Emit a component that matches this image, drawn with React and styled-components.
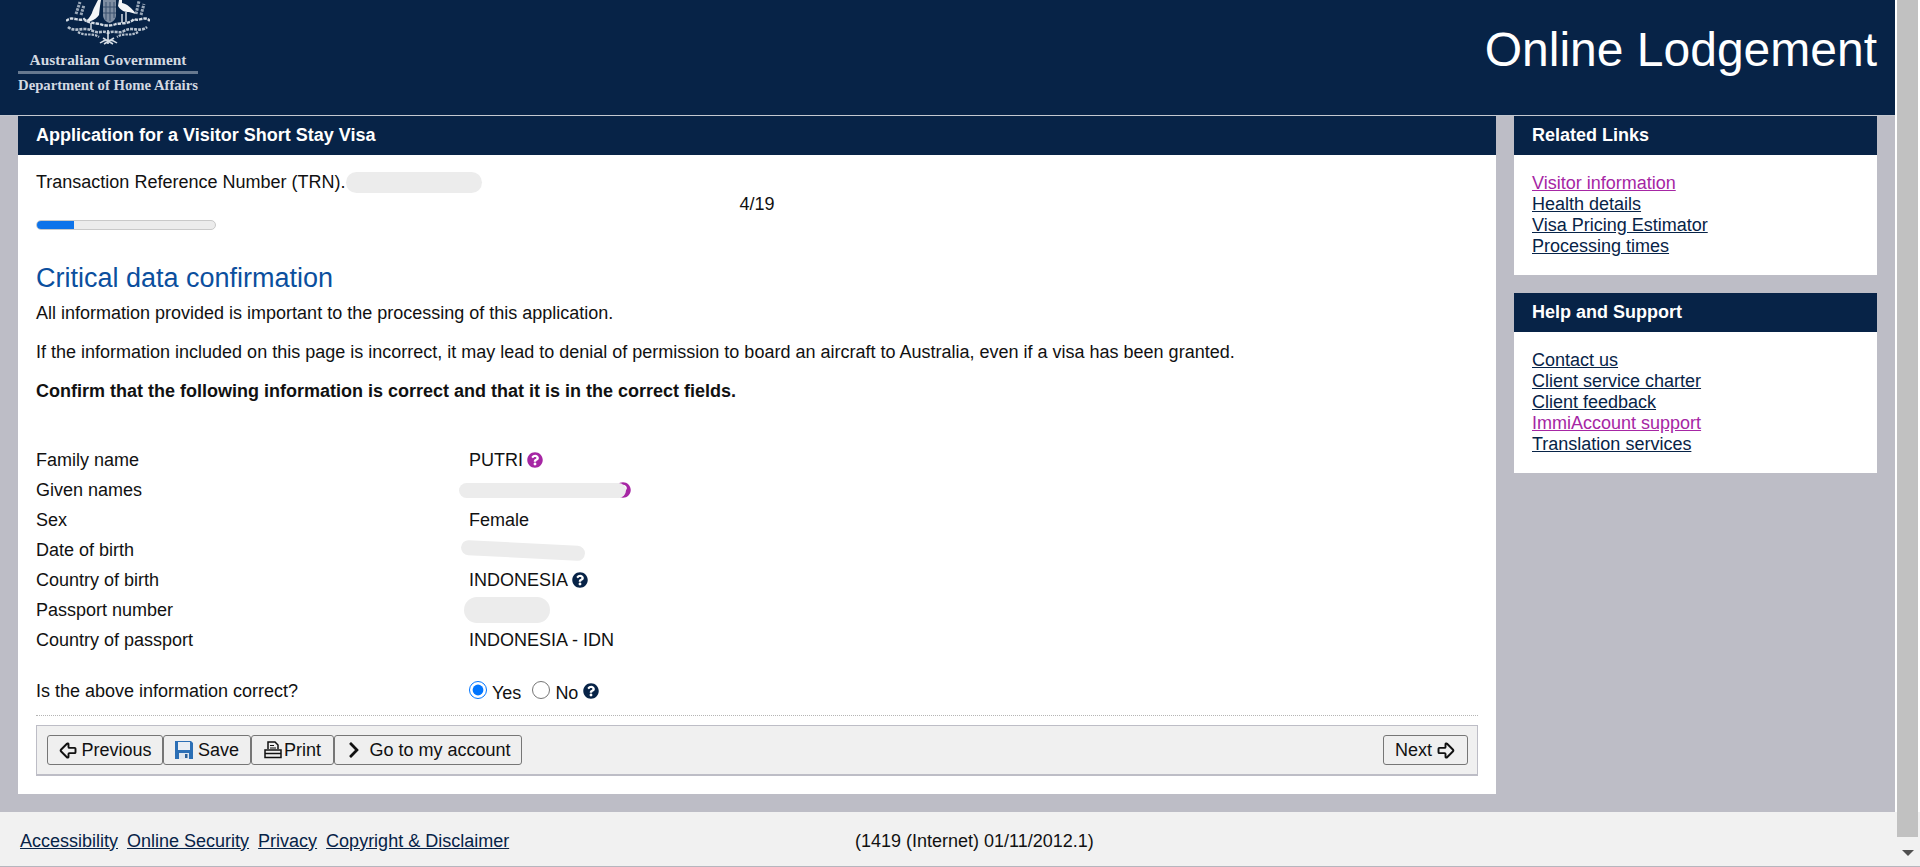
import React from "react";
import styled, { createGlobalStyle } from "styled-components";
import { FaQuestionCircle, FaChevronRight } from "react-icons/fa";
import { ArrowBigLeft, ArrowBigRight } from "lucide-react";

const NAVY = "#072347";
const VISITED = "#a626a4";

const GlobalStyle = createGlobalStyle`
  html, body {
    margin: 0;
    padding: 0;
    height: 867px;
    overflow: hidden;
    background: #fff;
    font-family: "Liberation Sans", Arial, sans-serif;
    font-size: 18px;
    line-height: 21px;
    color: #111;
  }
`;

const Shell = styled.div`
  display: flex;
  height: 866px;
  border-bottom: 1px solid #b6b6be;
  overflow: hidden;
`;

const Page = styled.div`
  width: 1895px;
  display: flex;
  flex-direction: column;
  background: #bdbdc6;
`;

/* fake browser scrollbar */
const ScrollTrack = styled.div`
  flex: 1;
  display: flex;
  flex-direction: column;
  align-items: center;
  background: linear-gradient(#fff, #fff) top / 100% 812px no-repeat, #f1f1f1;
  padding: 0 2px;
`;

const ScrollThumb = styled.div`
  width: 21px;
  height: 837px;
  background: #c1c1c1;
`;

const ScrollArrow = styled.div`
  margin-top: 13px;
  width: 0;
  height: 0;
  border-left: 6px solid transparent;
  border-right: 6px solid transparent;
  border-top: 6px solid #505050;
`;

const Header = styled.header`
  height: 115px;
  flex: none;
  display: flex;
  justify-content: space-between;
  background: ${NAVY};
  border-bottom: 1px solid #c4c8d0;
  padding: 0 18px;
`;

const Logo = styled.div`
  width: 180px;
  display: flex;
  flex-direction: column;
  align-items: center;
`;

const Crest = styled.svg`
  width: 84px;
  height: 46px;
  flex: none;
`;

const LogoTop = styled.div`
  width: 100%;
  text-align: center;
  white-space: nowrap;
  font: bold 15.4px/15px "Liberation Serif", "Times New Roman", serif;
  color: #d3d9e1;
  margin-top: 6px;
  padding-bottom: 4px;
  border-bottom: 3px solid #66788f;
`;

const LogoBottom = styled.div`
  white-space: nowrap;
  font: bold 14.7px/15px "Liberation Serif", "Times New Roman", serif;
  color: #d3d9e1;
  margin-top: 4px;
`;

const SiteTitle = styled.h1`
  margin: 24px 0 0;
  font-size: 48px;
  line-height: 52px;
  font-weight: 400;
  color: #fff;
`;

const Columns = styled.div`
  flex: 1;
  display: grid;
  grid-template-columns: 1478px 363px;
  column-gap: 18px;
  padding: 0 18px;
  align-items: start;
`;

const Panel = styled.section`
  background: #fff;
`;

const PanelHead = styled.h2`
  margin: 0;
  height: 39px;
  background: ${NAVY};
  color: #fff;
  font-size: 18px;
  line-height: 38px;
  font-weight: 700;
  padding: 0 18px;
`;

const MainBody = styled.div`
  padding: 17px 18px 18px;
`;

const TrnLine = styled.div`
  display: flex;
  align-items: center;
  height: 21px;
`;

const Blob = styled.span`
  display: inline-block;
  flex: none;
  width: ${(p) => p.$w}px;
  height: ${(p) => p.$h}px;
  margin-left: ${(p) => p.$ml || 0}px;
  background: #ececec;
  border-radius: ${(p) => p.$h / 2}px;
  position: relative;
  z-index: 1;
  transform: rotate(${(p) => p.$tilt || 0}deg);
`;

const StepCount = styled.div`
  text-align: center;
  height: 21px;
  margin-top: 1px;
`;

const Progress = styled.div`
  width: 180px;
  height: 10px;
  box-sizing: border-box;
  margin-top: 5px;
  background: #ececec;
  border: 1px solid #c9c9c9;
  border-radius: 5px;
  overflow: hidden;
`;

const ProgressFill = styled.div`
  height: 100%;
  background: #0d73ea;
`;

const Heading = styled.h3`
  margin: 33px 0 0;
  font-size: 27px;
  line-height: 30px;
  font-weight: 400;
  color: #0b4f9e;
`;

const Para = styled.p`
  margin: ${(p) => p.$top}px 0 0;
  font-weight: ${(p) => (p.$bold ? 700 : 400)};
`;

const DataList = styled.div`
  margin-top: 43px;
`;

const DataRow = styled.div`
  display: grid;
  grid-template-columns: 433px 1fr;
  height: 30px;
  align-items: center;
`;

const Value = styled.div`
  display: flex;
  align-items: center;
  gap: 4px;
`;

const Help = styled(FaQuestionCircle)`
  width: 16px;
  height: 16px;
  color: ${(p) => p.$color || NAVY};
  flex: none;
`;

const HiddenHelp = styled(Help)`
  margin-left: -15px;
`;

const QuestionRow = styled(DataRow)`
  margin-top: 21px;
`;

const Radio = styled.input`
  width: 18px;
  height: 18px;
  margin: 0 5px 2px 0;
  accent-color: #0075ff;
  flex: none;
`;

const RadioText = styled.span`
  margin: 4px 11px 0 0;
`;

const Rule = styled.hr`
  margin: 9px 0 0;
  border: 0;
  border-top: 1px dotted #b5b5b5;
`;

const NavBar = styled.div`
  margin-top: 9px;
  height: 51px;
  box-sizing: border-box;
  display: flex;
  align-items: center;
  justify-content: space-between;
  padding: 0 9px 0 10px;
  background: #f0f0f0;
  border: 2px solid #bdbdc6;
  border-width: 1px 1px 2px;
`;

const ButtonGroup = styled.div`
  display: flex;
`;

const NavButton = styled.button`
  display: flex;
  align-items: center;
  gap: ${(p) => p.$gap || 2}px;
  height: 30px;
  width: ${(p) => p.$w}px;
  box-sizing: border-box;
  justify-content: center;
  padding: 0;
  background: #efefef;
  border: 1px solid #767676;
  border-radius: 3px;
  font: inherit;
  color: #111;
  white-space: nowrap;
`;

const Side = styled.div`
  display: flex;
  flex-direction: column;
  gap: 18px;
`;

const LinkList = styled.div`
  display: flex;
  flex-direction: column;
  align-items: flex-start;
  padding: 18px 18px ${(p) => p.$bottom}px;
`;

const PageLink = styled.a`
  color: ${(p) => (p.$visited ? VISITED : NAVY)};
  text-decoration: underline;
`;

const Footer = styled.footer`
  margin-top: auto;
  height: 54px;
  flex: none;
  box-sizing: border-box;
  display: grid;
  grid-template-columns: 835px auto;
  align-items: center;
  padding: 4px 20px 0;
  background: #f1f1f1;
`;

const FooterLinks = styled.nav`
  display: flex;
  gap: 9px;
`;

const CrestLogo = () => (
  <Crest viewBox="0 0 84 46" aria-hidden="true">
    <path d="M32 0C29 6 27 9 26 13C24 17 22 20 18 22L25 21C28 20 31 18 33 15L34 6L35 0Z" fill="#f4f6f8" />
    <path d="M53 0L52 6C55 11 59 12 63 12L70 14C66 8 61 4 56 3L56 0Z" fill="#f4f6f8" />
    <path d="M37 0H50V15C50 19 47 22 43.5 23C40 22 37 19 37 15Z" fill="#7f8ea3" />
    <path d="M40 2V20M44 2V21M48 2V18M37 7H50M37 13H50" stroke="#3a516f" strokeWidth="1" />
    <path d="M60 12V22M25 23V30M56 14V23" stroke="#d5dce4" strokeWidth="1.5" />
    <path d="M0 21C6 15 12 22 18 19C22 23 28 23 34 24C38 26 46 26 50 24C56 23 64 24 68 19C73 22 79 15 84 21" fill="none" stroke="#d5dce4" strokeWidth="2.4" strokeDasharray="3.5 1" />
    <path d="M2 27C9 33 18 26 27 31C32 34 37 30 42 33C48 30 53 34 58 31C66 26 74 33 81 27" fill="none" stroke="#b5c0cd" strokeWidth="2.6" strokeDasharray="3 1" />
    <path d="M12 32C20 37 26 32 33 37M72 32C64 37 58 32 51 37" fill="none" stroke="#b5c0cd" strokeWidth="2.2" strokeDasharray="2.5 1" />
    <path d="M34 43C39 39 46 39 51 43M42 30V44M37 38L47 44M48 38L38 44" fill="none" stroke="#d5dce4" strokeWidth="1.6" />
    <path d="M10 14L14 2M15 15L18 5M70 14L73 1M75 15L78 4" stroke="#9aa8b9" strokeWidth="3" strokeDasharray="2.5 1" />
  </Crest>
);

const SaveIcon = () => (
  <svg width="18" height="18" viewBox="0 0 18 18" aria-hidden="true">
    <path d="M0 0H16L18 2V18H0Z" fill="#2c6fb5" />
    <rect x="3" y="1" width="12" height="8" fill="#e9eef4" />
    <rect x="4" y="12" width="10" height="6" fill="#dfe6ee" />
    <rect x="10" y="13" width="2.5" height="4" fill="#2c5f96" />
  </svg>
);

const PrintIcon = () => (
  <svg width="18" height="18" viewBox="0 0 18 18" fill="none" stroke="#111" aria-hidden="true">
    <path d="M4 8V1H11L14 4V8" strokeWidth="1.5" />
    <path d="M6 4.5H10M6 7H12" strokeWidth="1.2" />
    <path d="M1 9H17V16.5H1Z" strokeWidth="1.5" />
    <path d="M1 12.5H17" strokeWidth="1.5" />
  </svg>
);

const rows = [
  { label: "Family name", value: "PUTRI", help: VISITED },
  { label: "Given names", blob: { $w: 167, $h: 15, $ml: -10 }, hidden: true },
  { label: "Sex", value: "Female" },
  { label: "Date of birth", blob: { $w: 124, $h: 15, $ml: -8, $tilt: 3 } },
  { label: "Country of birth", value: "INDONESIA", help: NAVY },
  { label: "Passport number", blob: { $w: 86, $h: 26, $ml: -5 } },
  { label: "Country of passport", value: "INDONESIA - IDN" },
];

const relatedLinks = [
  { text: "Visitor information", visited: true },
  { text: "Health details" },
  { text: "Visa Pricing Estimator" },
  { text: "Processing times" },
];

const helpLinks = [
  { text: "Contact us" },
  { text: "Client service charter" },
  { text: "Client feedback" },
  { text: "ImmiAccount support", visited: true },
  { text: "Translation services" },
];

const footerLinks = ["Accessibility", "Online Security", "Privacy", "Copyright & Disclaimer"];

const App = () => {
  return (
    <Shell>
      <GlobalStyle />
      <Page>
        <Header>
          <Logo>
            <CrestLogo />
            <LogoTop>Australian Government</LogoTop>
            <LogoBottom>Department of Home Affairs</LogoBottom>
          </Logo>
          <SiteTitle>Online Lodgement</SiteTitle>
        </Header>

        <Columns>
          <Panel>
            <PanelHead>Application for a Visitor Short Stay Visa</PanelHead>
            <MainBody>
              <TrnLine>
                Transaction Reference Number (TRN).
                <Blob $w={136} $h={21} $ml={1} />
              </TrnLine>
              <StepCount>4/19</StepCount>
              <Progress>
                <ProgressFill style={{ width: `${(4 / 19) * 100}%` }} />
              </Progress>
              <Heading>Critical data confirmation</Heading>
              <Para $top={10}>All information provided is important to the processing of this application.</Para>
              <Para $top={18}>
                If the information included on this page is incorrect, it may lead to denial of permission to board an
                aircraft to Australia, even if a visa has been granted.
              </Para>
              <Para $top={18} $bold>
                Confirm that the following information is correct and that it is in the correct fields.
              </Para>

              <DataList>
                {rows.map((row) => (
                  <DataRow key={row.label}>
                    <span>{row.label}</span>
                    <Value>
                      {row.value}
                      {row.help && <Help $color={row.help} />}
                      {row.blob && <Blob {...row.blob} />}
                      {row.hidden && <HiddenHelp $color={VISITED} />}
                    </Value>
                  </DataRow>
                ))}
              </DataList>

              <QuestionRow>
                <span>Is the above information correct?</span>
                <Value style={{ gap: 0 }}>
                  <Radio type="radio" name="correct" defaultChecked />
                  <RadioText>Yes</RadioText>
                  <Radio type="radio" name="correct" />
                  <RadioText style={{ marginRight: 5 }}>No</RadioText>
                  <Help />
                </Value>
              </QuestionRow>

              <Rule />
              <NavBar>
                <ButtonGroup>
                  <NavButton $w={116}>
                    <ArrowBigLeft size={21} strokeWidth={2.2} />
                    Previous
                  </NavButton>
                  <NavButton $w={88} $gap={5}>
                    <SaveIcon />
                    Save
                  </NavButton>
                  <NavButton $w={83}>
                    <PrintIcon />
                    Print
                  </NavButton>
                  <NavButton $w={188} $gap={6}>
                    <FaChevronRight size={18} />
                    Go to my account
                  </NavButton>
                </ButtonGroup>
                <NavButton $w={85} $gap={3}>
                  Next
                  <ArrowBigRight size={21} strokeWidth={2.2} />
                </NavButton>
              </NavBar>
            </MainBody>
          </Panel>

          <Side>
            <Panel>
              <PanelHead>Related Links</PanelHead>
              <LinkList $bottom={18}>
                {relatedLinks.map((l) => (
                  <PageLink key={l.text} href="#" $visited={l.visited}>
                    {l.text}
                  </PageLink>
                ))}
              </LinkList>
            </Panel>
            <Panel>
              <PanelHead>Help and Support</PanelHead>
              <LinkList $bottom={18}>
                {helpLinks.map((l) => (
                  <PageLink key={l.text} href="#" $visited={l.visited}>
                    {l.text}
                  </PageLink>
                ))}
              </LinkList>
            </Panel>
          </Side>
        </Columns>

        <Footer>
          <FooterLinks>
            {footerLinks.map((text) => (
              <PageLink key={text} href="#">
                {text}
              </PageLink>
            ))}
          </FooterLinks>
          <span>(1419 (Internet) 01/11/2012.1)</span>
        </Footer>
      </Page>
      <ScrollTrack>
        <ScrollThumb />
        <ScrollArrow />
      </ScrollTrack>
    </Shell>
  );
};

export default App;
